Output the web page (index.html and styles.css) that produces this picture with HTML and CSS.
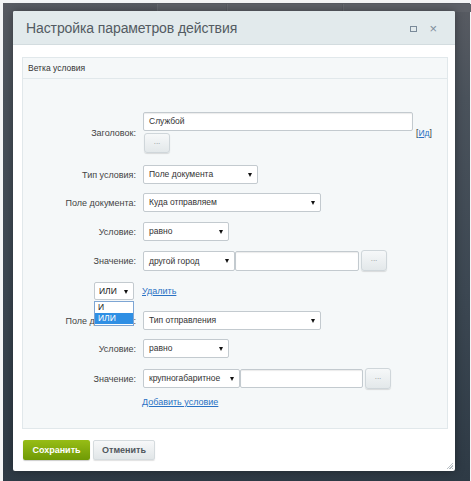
FILE: index.html
```html
<!DOCTYPE html>
<html lang="ru">
<head>
<meta charset="utf-8">
<title>Настройка параметров действия</title>
<link rel="stylesheet" href="styles.css">
</head>
<body>
<div class="screen">
  <div class="bg-tabs">
    <div class="bg-tab t1"></div>
    <div class="bg-tab t2"></div>
    <div class="bg-tab t3"></div>
  </div>
  <div class="dialog">
    <div class="dialog-head">
      <div class="dialog-title">Настройка параметров действия</div>
      <div class="head-icons">
        <span class="ico-max"></span>
        <span class="ico-close">×</span>
      </div>
    </div>
    <div class="dialog-body">
      <div class="panel">
        <div class="panel-head">Ветка условия</div>
        <div class="form">
          <div class="row row-title">
            <div class="label">Заголовок:</div>
            <div class="field col">
              <div class="line">
                <div class="input w-title">Службой</div>
                <span class="idlink">[<a href="#">Ид</a>]</span>
              </div>
              <div class="btn-dots b-first">...</div>
            </div>
          </div>
          <div class="row r2">
            <div class="label">Тип условия:</div>
            <div class="field"><div class="select w115">Поле документа<i class="arr"></i></div></div>
          </div>
          <div class="row r3">
            <div class="label">Поле документа:</div>
            <div class="field"><div class="select w178">Куда отправляем<i class="arr"></i></div></div>
          </div>
          <div class="row r4">
            <div class="label">Условие:</div>
            <div class="field"><div class="select w86">равно<i class="arr"></i></div></div>
          </div>
          <div class="row r5">
            <div class="label">Значение:</div>
            <div class="field">
              <div class="select w92 h20">другой город<i class="arr"></i></div>
              <div class="input w124 h20"></div>
              <div class="btn-dots">...</div>
            </div>
          </div>
          <div class="row r6">
            <div class="label lbl-select">
              <div class="select w40 op">ИЛИ<i class="arr"></i>
                <div class="dropdown">
                  <div class="opt">И</div>
                  <div class="opt sel">ИЛИ</div>
                </div>
              </div>
            </div>
            <div class="field"><a href="#" class="link">Удалить</a></div>
          </div>
          <div class="row r7">
            <div class="label">Поле документа:</div>
            <div class="field"><div class="select w178">Тип отправления<i class="arr"></i></div></div>
          </div>
          <div class="row r8">
            <div class="label">Условие:</div>
            <div class="field"><div class="select w86">равно<i class="arr"></i></div></div>
          </div>
          <div class="row r9">
            <div class="label">Значение:</div>
            <div class="field">
              <div class="select w97">крупногабаритное<i class="arr"></i></div>
              <div class="input w123"></div>
              <div class="btn-dots">...</div>
            </div>
          </div>
          <div class="row r10">
            <div class="label"></div>
            <div class="field"><a href="#" class="link">Добавить условие</a></div>
          </div>
        </div>
      </div>
      <div class="footer">
        <div class="btn-save">Сохранить</div>
        <div class="btn-cancel">Отменить</div>
      </div>
    </div>
    <div class="grip"></div>
  </div>
</div>
</body>
</html>
```
FILE: styles.css
```css
html, body {
  margin: 0;
  padding: 0;
  background: #f4f5f6;
}
body {
  font-family: "Liberation Sans", Arial, sans-serif;
  width: 471px;
  height: 481px;
  overflow: hidden;
}
.screen {
  position: relative;
  margin: 3px 1px 0 3px;
  height: 478px;
  padding: 8px 0 0 10px;
  box-sizing: border-box;
  background: linear-gradient(180deg, #585b62 0%, #4a525b 20%, #3c4752 60%, #2e3a45 100%);
}
.bg-tabs {
  position: absolute;
  left: 0; top: 0; right: 0;
  height: 8px;
}
.bg-tab {
  position: absolute;
  top: 1px;
  height: 8px;
  background: #5e6168;
  border-left: 1px solid #676a70;
}
.t1 { left: 154px; width: 68px; }
.t2 { left: 224px; width: 114px; }
.t3 { left: 340px; width: 130px; }

.dialog {
  position: relative;
  width: 442px;
  height: 460px;
  background: #fff;
  border-radius: 2px;
  box-shadow: 0 0 10px rgba(0,0,0,0.35);
}
.dialog-head {
  height: 33px;
  background: #e2eaec;
  border-bottom: 1px solid #d3dcdf;
  border-radius: 2px 2px 0 0;
  display: flex;
  align-items: center;
  justify-content: space-between;
  padding: 0 18px 0 13px;
}
.dialog-title {
  font-size: 14px;
  color: #535b62;
  letter-spacing: -0.1px;
}
.head-icons {
  display: flex;
  align-items: center;
  gap: 12px;
  padding-top: 2px;
}
.ico-max {
  width: 5px;
  height: 4px;
  border: 1px solid #7a8a99;
}
.ico-close {
  font-size: 13px;
  line-height: 10px;
  color: #7f8e9c;
}
.dialog-body {
  padding: 12px 7px 0 9px;
}
.panel {
  height: 370px;
  border: 1px solid #e1e8eb;
  background: #f5f8f9;
}
.panel-head {
  height: 20px;
  border-bottom: 1px solid #e1e8eb;
  font-size: 8.5px;
  color: #333;
  line-height: 20px;
  padding-left: 5px;
}
.form {
  padding-top: 33px;
}
.row {
  display: grid;
  grid-template-columns: 120px 1fr;
  align-items: center;
}
.label {
  text-align: right;
  padding-right: 7px;
  font-size: 9px;
  color: #444;
}
.field {
  display: flex;
  align-items: center;
}
.field.col {
  flex-direction: column;
  align-items: flex-start;
}
.line {
  display: flex;
  align-items: flex-end;
}
.r2 { margin-top: 12px; }
.r3 { margin-top: 9px; }
.r4 { margin-top: 10px; }
.r5 { margin-top: 9px; }
.r6 { margin-top: 11px; }
.r7 { margin-top: 11px; }
.r8 { margin-top: 9px; }
.r9 { margin-top: 10px; }
.r10 { margin-top: 8px; }

.select, .input {
  position: relative;
  box-sizing: border-box;
  height: 19px;
  background: #fff;
  border: 1px solid #c3cacf;
  border-radius: 2px;
  font-size: 8.5px;
  color: #333;
  line-height: 17px;
  padding-left: 5px;
  white-space: nowrap;
  text-align: left;
}
.input {
  box-shadow: inset 0 1px 1px rgba(0,0,0,0.08);
}
.arr {
  position: absolute;
  right: 5px;
  top: 7px;
  width: 0;
  height: 0;
  border-left: 2.5px solid transparent;
  border-right: 2.5px solid transparent;
  border-top: 4px solid #111;
}
.w-title { width: 270px; height: 19px; }
.w115 { width: 115px; }
.w178 { width: 178px; }
.w86 { width: 86px; }
.w92 { width: 92px; }
.w97 { width: 97px; }
.w124 { width: 124px; margin-left: 0; }
.w123 { width: 123px; margin-left: 0; }
.w40 { width: 40px; height: 18px; line-height: 16px; padding-left: 4px; }
.h20 { height: 20px; line-height: 18px; }

.idlink {
  font-size: 8.5px;
  color: #333;
  margin-left: 3px;
  margin-bottom: -7px;
}
.idlink a, .link {
  color: #2a72c4;
  text-decoration: underline;
}
.link {
  font-size: 9px;
}
.r6 .link { margin-left: -1px; }
.r10 .link { margin-left: -1px; }

.btn-dots {
  box-sizing: border-box;
  width: 26px;
  height: 21px;
  margin-left: 2px;
  border: 1px solid #cfd6da;
  border-radius: 3px;
  background: linear-gradient(180deg, #f6f8f9 0%, #e3e8ea 100%);
  box-shadow: 0 1px 1px rgba(0,0,0,0.12);
  font-size: 8px;
  color: #8a9296;
  text-align: center;
  line-height: 16px;
}
.b-first {
  margin: 2px 0 0 1px;
  height: 20px;
}

.lbl-select {
  display: flex;
  justify-content: flex-end;
  padding-right: 9px;
}
.op { color: #222; }
.dropdown {
  position: absolute;
  left: -1px;
  top: 18px;
  width: 40px;
  box-sizing: border-box;
  background: #fff;
  border: 1px solid #7ea6d4;
  z-index: 5;
  padding: 0;
}
.opt {
  height: 11px;
  line-height: 11px;
  font-size: 8.5px;
  padding-left: 3px;
  color: #222;
}
.opt.sel {
  background: #2f8fe4;
  color: #fff;
  margin-bottom: 1px;
}

.footer {
  display: flex;
  gap: 3px;
  margin-top: 11px;
  padding-left: 1px;
}
.btn-save, .btn-cancel {
  box-sizing: border-box;
  height: 20px;
  border-radius: 2px;
  font-size: 9px;
  font-weight: bold;
  text-align: center;
  line-height: 20px;
}
.btn-save {
  width: 67px;
  background: linear-gradient(180deg, #97bd16 0%, #6f9a05 100%);
  color: #fff;
  box-shadow: 0 1px 1px rgba(0,0,0,0.2);
}
.btn-cancel {
  width: 62px;
  background: linear-gradient(180deg, #f7f8f9 0%, #e1e6e8 100%);
  border: 1px solid #d5dbde;
  line-height: 18px;
  color: #50575d;
  box-shadow: 0 1px 1px rgba(0,0,0,0.12);
}
.grip {
  position: absolute;
  right: 2px;
  bottom: 2px;
  width: 7px;
  height: 7px;
  background: repeating-linear-gradient(135deg, transparent 0, transparent 1px, #b9c0c5 1px, #b9c0c5 2px);
  clip-path: polygon(100% 0, 100% 100%, 0 100%);
}
```
